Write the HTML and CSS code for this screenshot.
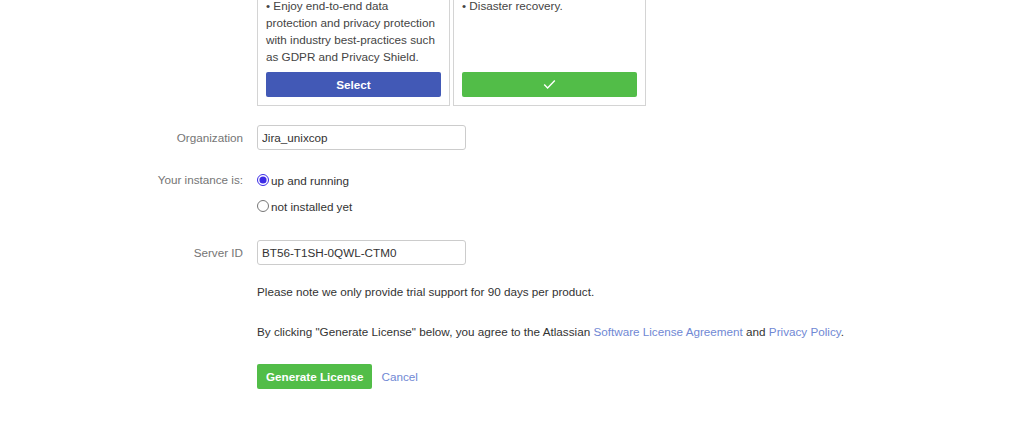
FILE: index.html
```html
<!DOCTYPE html>
<html lang="en">
<head>
  <meta charset="UTF-8" />
  <meta name="viewport" content="width=device-width, initial-scale=1.0" />
  <title>New Evaluation License</title>
  <link rel="stylesheet" href="styles.css">
</head>
<body>

  <form class="license-form">

    <div class="form-row cards-row">
      <div class="row-label"></div>
      <div class="plan-cards">
        <div class="plan-card">
          <div class="plan-features">
            <p>• Enjoy end-to-end data protection and privacy protection with industry best-practices such as GDPR and Privacy Shield.</p>
          </div>
          <button type="button" class="plan-button select">Select</button>
        </div>
        <div class="plan-card">
          <div class="plan-features">
            <p>• Disaster recovery.</p>
          </div>
          <button type="button" class="plan-button chosen">
            <svg width="13" height="11" viewBox="0 0 13 11"><path d="M1.2 5.6 L4.6 9 L11.8 1.6" fill="none" stroke="#fff" stroke-width="1.4"/></svg>
          </button>
        </div>
      </div>
    </div>

    <div class="form-row org-row">
      <label class="row-label" for="organization">Organization</label>
      <input type="text" id="organization" class="text-input" value="Jira_unixcop" />
    </div>

    <div class="form-row instance-row">
      <div class="row-label">Your instance is:</div>
      <div class="radio-list">
        <label class="radio-line"><input type="radio" name="instance" checked /> up and running</label>
        <label class="radio-line"><input type="radio" name="instance" /> not installed yet</label>
      </div>
    </div>

    <div class="form-row server-row">
      <label class="row-label" for="serverid">Server ID</label>
      <input type="text" id="serverid" class="text-input" value="BT56-T1SH-0QWL-CTM0" />
    </div>

    <div class="form-row note-row">
      <div class="row-label"></div>
      <p>Please note we only provide trial support for 90 days per product.</p>
    </div>

    <div class="form-row agree-row">
      <div class="row-label"></div>
      <p>By clicking "Generate License" below, you agree to the Atlassian <a href="#">Software License Agreement</a> and <a href="#">Privacy Policy</a>.</p>
    </div>

    <div class="form-row actions-row">
      <div class="row-label"></div>
      <div class="actions">
        <button type="submit" class="generate-button">Generate License</button>
        <a href="#" class="cancel-link">Cancel</a>
      </div>
    </div>

  </form>

</body>
</html>
```

FILE: styles.css
```css
body {
  margin: 0;
  font-family: 'Liberation Sans', Arial, sans-serif;
  font-size: 11.7px;
  color: #333;
  background-color: #fff;
}

p {
  margin: 0;
}

a {
  color: #7088d4;
  text-decoration: none;
}

.form-row {
  display: grid;
  grid-template-columns: 243px 1fr;
  column-gap: 14px;
  align-items: center;
}

.row-label {
  text-align: right;
  color: #757575;
}

.cards-row {
  margin-top: -13px;
  align-items: start;
}

.plan-cards {
  display: flex;
  gap: 3px;
}

.plan-card {
  width: 175px;
  padding: 9px 8px 8px 8px;
  border: 1px solid #d4d4d4;
  display: flex;
  flex-direction: column;
  line-height: 17px;
  color: #444;
}

.plan-features {
  flex: 1;
  margin-bottom: 7px;
}

.plan-button {
  height: 25px;
  border: none;
  border-radius: 2px;
  color: #fff;
  font-family: inherit;
  font-size: 11.7px;
  font-weight: bold;
  display: flex;
  align-items: center;
  justify-content: center;
}

.plan-button.select {
  background-color: #4259b6;
}

.plan-button.chosen {
  background-color: #52bd48;
}

.text-input {
  height: 25px;
  box-sizing: border-box;
  width: 209px;
  padding: 0 4px;
  border: 1px solid #ccc;
  border-radius: 3px;
  font-family: inherit;
  font-size: 11.7px;
  color: #333;
}

.org-row {
  margin-top: 19px;
}

.instance-row {
  margin-top: 17px;
  align-items: start;
}

.instance-row .row-label {
  line-height: 26px;
}

.radio-line {
  display: flex;
  align-items: center;
  height: 26px;
}

.radio-line input {
  width: 12px;
  height: 12px;
  margin: 0 2px 0 0;
  accent-color: #3b2be6;
}

.server-row {
  margin-top: 21px;
}

.note-row {
  margin-top: 18px;
  line-height: 17px;
}

.agree-row {
  margin-top: 23px;
  line-height: 17px;
}

.actions-row {
  margin-top: 24px;
}

.actions {
  display: flex;
  align-items: center;
  gap: 9px;
}

.generate-button {
  height: 25px;
  padding: 0 9px;
  border: none;
  border-radius: 2px;
  background-color: #52bd48;
  color: #fff;
  font-family: inherit;
  font-size: 11.7px;
  font-weight: bold;
}
```
